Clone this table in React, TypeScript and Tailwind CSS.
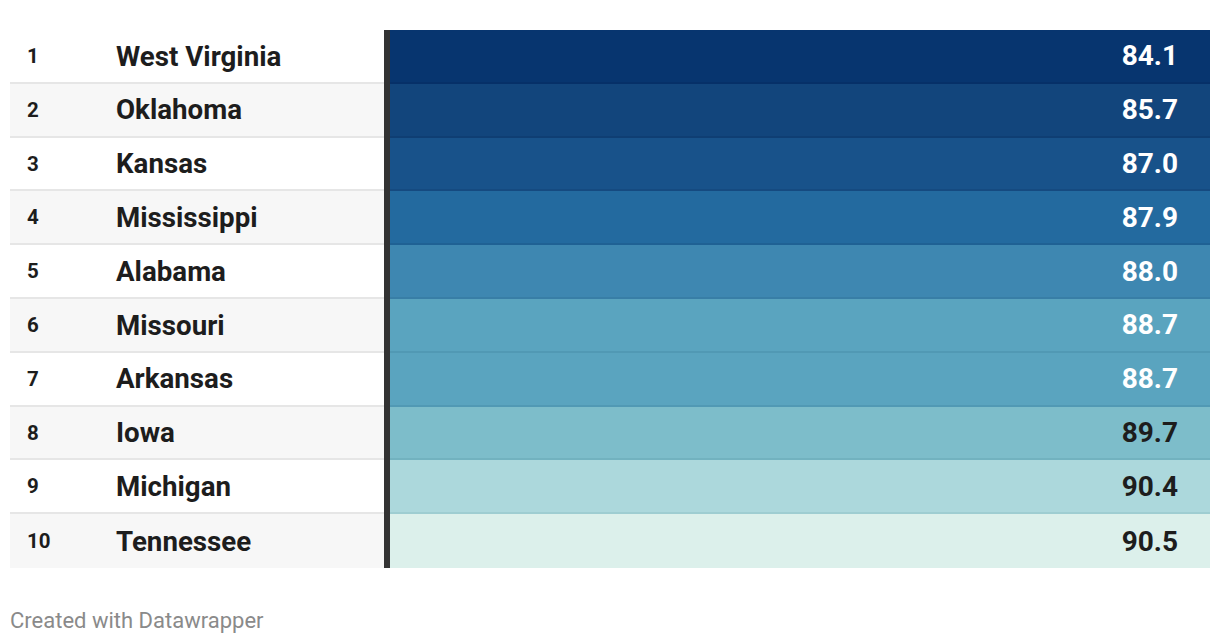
import React from "react";

const rows = [
  { r: 1, n: "West Virginia", v: "84.1", bg: "bg-[#07356f]", bd: "border-[#063068]", light: true },
  { r: 2, n: "Oklahoma", v: "85.7", bg: "bg-[#12457c]", bd: "border-[#0f3e73]", light: true },
  { r: 3, n: "Kansas", v: "87.0", bg: "bg-[#18528a]", bd: "border-[#154a80]", light: true },
  { r: 4, n: "Mississippi", v: "87.9", bg: "bg-[#236a9f]", bd: "border-[#1f6194]", light: true },
  { r: 5, n: "Alabama", v: "88.0", bg: "bg-[#3e87b1]", bd: "border-[#387ea6]", light: true },
  { r: 6, n: "Missouri", v: "88.7", bg: "bg-[#5aa4bf]", bd: "border-[#5199b4]", light: true },
  { r: 7, n: "Arkansas", v: "88.7", bg: "bg-[#5aa4bf]", bd: "border-[#5199b4]", light: true },
  { r: 8, n: "Iowa", v: "89.7", bg: "bg-[#7dbdca]", bd: "border-[#72b2bf]", light: false },
  { r: 9, n: "Michigan", v: "90.4", bg: "bg-[#acd8dc]", bd: "border-[#9ecdd1]", light: false },
  { r: 10, n: "Tennessee", v: "90.5", bg: "bg-[#dcf0eb]", bd: "border-[#cfe7e1]", light: false },
];

export default function App() {
  return (
    <div className="w-[1220px] h-[644px] bg-white font-['Roboto',sans-serif] text-[#1d1d1d]">
      <div className="pt-[30px] px-[10px]">
        {rows.map((row, i) => {
          const last = i === rows.length - 1;
          const stripe = i % 2 === 1 ? "bg-[#f7f7f7]" : "bg-white";
          return (
            <div key={row.r} className="flex h-[53.8px]">
              <div
                className={`flex items-center w-[374px] pt-[1px] ${stripe} ${last ? "" : "border-b-2 border-[#e6e6e6]"}`}
              >
                <div className="w-[106px] pl-[17px] text-[20.5px] font-bold">{row.r}</div>
                <div className="text-[27.7px] font-bold">{row.n}</div>
              </div>
              <div className="w-[6px] bg-[#333333]" />
              <div
                className={`flex-1 flex items-center justify-end pr-[32px] pt-[1px] ${row.bg} ${last ? "" : "border-b-2 " + row.bd}`}
              >
                <span
                  className={`text-[28px] font-bold ${row.light ? "text-white" : "text-[#1d1d1d]"}`}
                >
                  {row.v}
                </span>
              </div>
            </div>
          );
        })}
      </div>
      <div className="pl-[10px] pt-[38px] text-[22px] leading-[30px] text-[#8a8a8a]">Created with Datawrapper</div>
    </div>
  );
}
